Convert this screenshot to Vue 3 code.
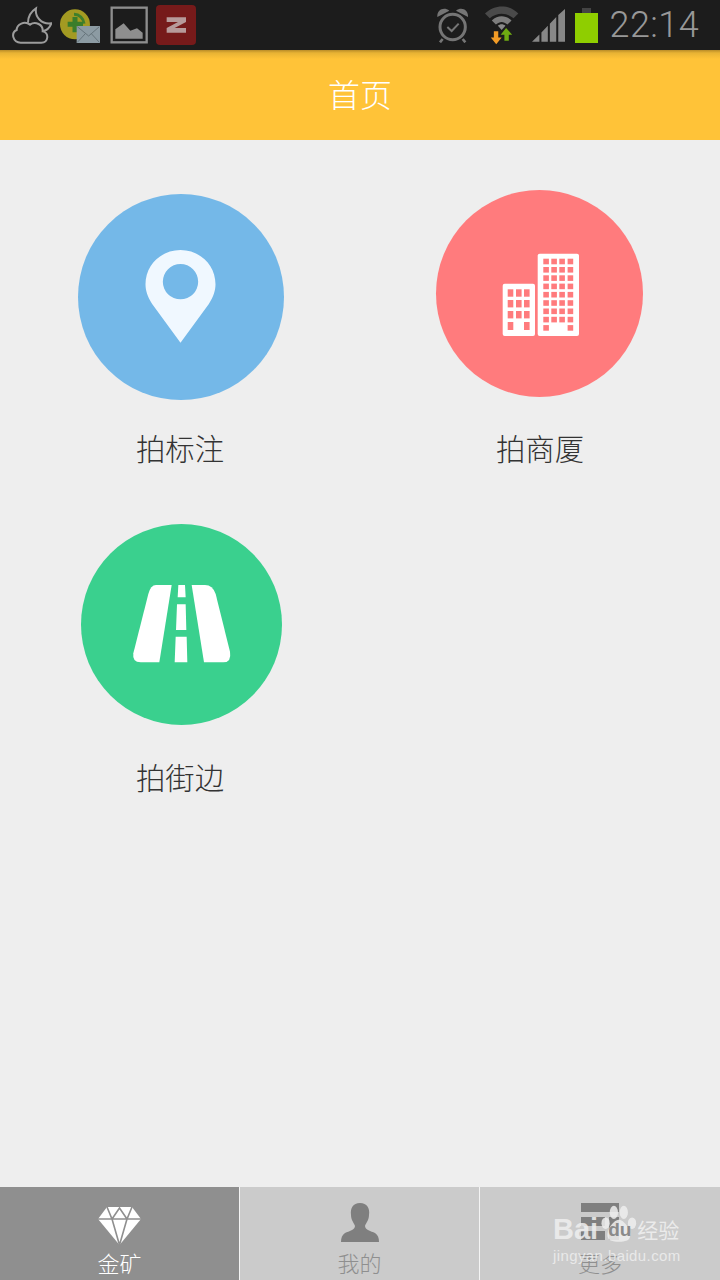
<template>
  <div class="page">
    <!-- 状态栏 -->
    <div class="status">
      <svg class="st-cloud" viewBox="36 15 120 120">
        <path d="M62 128C38 128 32 98 50 90C50 72 74 62 90 74C106 62 130 74 128 94C148 98 146 128 124 128Z" fill="none" stroke="#9c9c9c" stroke-width="6" />
        <path d="M84 68C84 50 94 34 108 25C104 50 124 74 154 70C149 84 140 91 129 93" fill="none" stroke="#9c9c9c" stroke-width="6" />
      </svg>
      <svg class="st-mail" viewBox="177 18 126 111">
        <circle cx="225" cy="70" r="45" fill="#a39a22" />
        <path d="M222 40a30 30 0 0 1 30 28" fill="none" stroke="#3f7f2c" stroke-width="9" />
        <path d="M225 48v46M203 70h46" stroke="#3a7d2a" stroke-width="15" />
        <rect x="230" y="75" width="70" height="51" fill="#8c9ba3" />
        <path d="M232 77l34 28 32-28M232 124l24-26M298 124l-24-26" fill="none" stroke="#66747b" stroke-width="3" />
      </svg>
      <svg class="st-pic" viewBox="327 18 114 114">
        <rect x="332" y="23" width="105" height="104" fill="none" stroke="#8e8e8e" stroke-width="7" />
        <path d="M343 116V88L368 70L388 92L408 85L425 98V116Z" fill="#8e8e8e" />
      </svg>
      <svg class="st-z" viewBox="468 15 120 120">
        <rect x="468" y="15" width="120" height="120" rx="12" fill="#761a1a" />
        <path d="M500 52h58v14l-34 18h34v14h-58v-14l34-18h-34z" fill="#b79a9a" />
      </svg>
      <div class="spacer"></div>
      <svg class="st-alarm" viewBox="55 25 96 105">
        <circle cx="102" cy="82" r="38" fill="none" stroke="#757575" stroke-width="9" />
        <path d="M56 52C54 30 76 20 92 33ZM148 52C150 30 128 20 112 33Z" fill="#757575" />
        <path d="M86 82l13 12 21-22" fill="none" stroke="#757575" stroke-width="6" />
        <path d="M72 118l-8 10M132 118l8 10" stroke="#757575" stroke-width="8" />
      </svg>
      <svg class="st-wifi" viewBox="198 18 100 114">
        <path d="M198 40C226 12 270 12 296 40L282 54C262 36 232 36 212 54Z" fill="#4a4a4a" />
        <path d="M218 60C236 44 258 44 276 60L264 72C252 62 242 62 230 72Z" fill="#7d7d7d" />
        <path d="M236 76C242 70 252 70 258 76L247 88Z" fill="#8a8a8a" />
        <path d="M224 92h13v18h10l-16 20-16-20h9z" fill="#f39c26" />
        <path d="M260 82l18 20h-10v18h-13v-18h-11z" fill="#6faa12" />
      </svg>
      <svg class="st-signal" viewBox="340 28 98 98">
        <path d="M340 125L362 104V125ZM368 98L387 78V125H368ZM393 72L412 52V125H393ZM418 46L438 28V125H418Z" fill="#878787" />
      </svg>
      <div class="battery">
        <div class="battery-cap"></div>
        <div class="battery-body"></div>
      </div>
      <div class="time">22:14</div>
    </div>

    <div class="header">首页</div>

    <!-- 入口列表 -->
    <div class="main">
      <div class="cell cell-mark">
        <div class="circle">
          <svg viewBox="1.5 6 300 330" width="100" height="110">
            <path fill-rule="evenodd" fill="#f0f8ff" d="M150 308L65 192C51 170 45 152 45 133C45 75 92 30 150 30C208 30 255 75 255 133C255 152 249 170 235 192ZM150 72A53 53 0 1 0 150 178A53 53 0 1 0 150 72Z" />
          </svg>
        </div>
        <div class="label">拍标注</div>
      </div>

      <div class="cell cell-building">
        <div class="circle">
          <svg viewBox="0 3 120 120" width="120" height="120">
            <rect x="22.7" y="52.7" width="32.3" height="52.3" rx="2" fill="#fff" />
            <rect x="57.7" y="22.7" width="41.3" height="82.3" rx="2" fill="#fff" />
            <rect v-for="w in windows" :key="w.x + '-' + w.y" :x="w.x" :y="w.y" :width="w.w" :height="w.h" fill="#ff7b7d" />
          </svg>
        </div>
        <div class="label">拍商厦</div>
      </div>

      <div class="cell cell-road">
        <div class="circle">
          <svg viewBox="6 0 360 330" width="120" height="110">
            <path fill="#fff" d="M108 45H155L118 277H62Q36 277 40 250L85 72Q92 45 108 45Z" />
            <path fill="#fff" d="M215 45H255Q278 45 287 72L330 245Q335 277 310 277H252Z" />
            <path fill="#fff" d="M175 45H195L197 82H173ZM171 103H197L199 180H168ZM167 200H200L202 277H164Z" />
          </svg>
        </div>
        <div class="label">拍街边</div>
      </div>
    </div>

    <!-- 底部导航 -->
    <div class="tabs">
      <div class="tab active">
        <svg class="tab-icon" viewBox="0 0 43 38" width="43" height="38">
          <path d="M9 0H34L43 12L21.5 38L0 12Z" fill="#fff" />
          <path d="M0 12H43M9 0L14 12L21.5 1L29 12L34 0M14 12L21.5 38L29 12" fill="none" stroke="#8f8f8f" stroke-width="1.6" />
        </svg>
        <span>金矿</span>
      </div>
      <div class="tab">
        <svg class="tab-icon" viewBox="0 0 38 39" width="38" height="39">
          <path fill="#7f7f7f" d="M19 0C26 0 29 5 28 12C28 17 25 20 24 23C24 27 30 28 34 30C37 32 38 35 38 39H0C0 35 1 32 4 30C8 28 14 27 14 23C13 20 10 17 10 12C9 5 12 0 19 0Z" />
        </svg>
        <span>我的</span>
      </div>
      <div class="tab">
        <svg class="tab-icon" viewBox="0 0 38 39" width="38" height="39">
          <path fill="#7f7f7f" d="M0 0H38V9H0ZM0 14H24V23H0ZM0 28H24V37H0ZM28 14H38V37H28Z" />
        </svg>
        <span>更多</span>
      </div>
    </div>

    <!-- 水印 -->
    <div class="watermark">
      <div class="wm-top">
        <span class="wm-bai">Bai</span>
        <span class="wm-paw">
          <svg viewBox="0 0 46 46" width="38" height="40">
            <ellipse cx="8" cy="22" rx="5" ry="7" fill="#eee" opacity=".85" />
            <ellipse cx="18" cy="9" rx="5" ry="8" fill="#eee" opacity=".85" />
            <ellipse cx="30" cy="9" rx="5" ry="8" fill="#eee" opacity=".85" />
            <ellipse cx="40" cy="22" rx="5" ry="7" fill="#eee" opacity=".85" />
            <path d="M24 18C32 18 44 38 34 43C28 45 20 45 14 43C4 38 16 18 24 18Z" fill="#eee" opacity=".85" />
          </svg>
          <span class="wm-du">du</span>
        </span>
        <span class="wm-cn">经验</span>
      </div>
      <div class="wm-url">jingyan.baidu.com</div>
    </div>
  </div>
</template>

<script setup>
// 楼房窗户，坐标按 120x120 的图标算
const windows = []
const smallX = [27.7, 36, 44]
const smallY = [58.3, 69, 80, 91]
smallY.forEach((y, r) => {
  smallX.forEach((x, c) => {
    if (r === 3 && c === 1) return
    windows.push({ x, y, w: 5.6, h: r === 3 ? 8 : 7.4 })
  })
})
const bigX = [63.3, 71.3, 79.3, 87.6]
for (let r = 0; r < 9; r++) {
  const y = 27.7 + r * 8.3
  bigX.forEach((x, c) => {
    if (r === 8 && (c === 1 || c === 2)) return
    windows.push({ x, y, w: 5.6, h: 5.6 })
  })
}
</script>

<style>
html,
body {
  margin: 0;
  background: #eee;
}
</style>

<style scoped>
.page {
  position: relative;
  width: 720px;
  height: 1280px;
  display: flex;
  flex-direction: column;
  overflow: hidden;
  background: #eee;
  font-family: "Noto Sans CJK SC", "Noto Sans", sans-serif;
}

.status {
  height: 50px;
  flex: none;
  display: flex;
  align-items: center;
  padding: 0 21px 0 12px;
  background: #1c1c1c;
}
.status svg {
  flex: none;
  display: block;
}
.spacer {
  flex: 1;
}
.st-cloud {
  width: 40px;
  height: 40px;
}
.st-mail {
  width: 42px;
  height: 37px;
  margin-left: 7px;
}
.st-pic {
  width: 38px;
  height: 38px;
  margin-left: 9px;
}
.st-z {
  width: 40px;
  height: 40px;
  margin-left: 8px;
}
.st-alarm {
  width: 32px;
  height: 35px;
}
.st-wifi {
  width: 34px;
  height: 39px;
  margin-left: 16px;
}
.st-signal {
  width: 33px;
  height: 33px;
  margin-left: 13px;
  margin-top: 1px;
}
.battery {
  width: 23px;
  margin-left: 10px;
  display: flex;
  flex-direction: column;
  align-items: center;
}
.battery-cap {
  width: 9px;
  height: 5px;
  background: #444;
}
.battery-body {
  width: 23px;
  height: 30px;
  background: #8fce00;
}
.time {
  margin-left: 12px;
  font-family: Roboto, "Liberation Sans", sans-serif;
  font-size: 36px;
  font-weight: 300;
  line-height: 50px;
  letter-spacing: 0.4px;
  color: #989898;
}

.header {
  height: 90px;
  flex: none;
  box-sizing: border-box;
  padding-bottom: 4px;
  display: flex;
  align-items: center;
  justify-content: center;
  font-size: 32px;
  font-weight: 300;
  color: #fff;
  background: linear-gradient(#b98c28 0, #e8b334 3px, #ffc338 9px);
}

.main {
  flex: 1;
  display: grid;
  grid-template-columns: 360px 360px;
  grid-auto-rows: min-content;
}
.cell {
  display: flex;
  flex-direction: column;
  align-items: center;
}
.circle {
  border-radius: 50%;
  display: flex;
  align-items: center;
  justify-content: center;
  overflow: hidden;
}
.circle svg {
  display: block;
  flex: none;
}
.label {
  height: 40px;
  font-size: 29.4px;
  font-weight: 300;
  line-height: 37px;
  color: #333;
}
.cell-mark {
  padding-top: 54px;
}
.cell-mark .circle {
  width: 206px;
  height: 206px;
  margin-left: 1px;
  background: #74b8e8;
}
.cell-mark .label {
  margin-top: 29px;
}
.cell-building {
  padding-top: 50px;
}
.cell-building .circle {
  width: 207px;
  height: 207px;
  margin-left: -1px;
  background: #ff7b7d;
}
.cell-building .label {
  margin-top: 32px;
}
.cell-road {
  padding-top: 55px;
}
.cell-road .circle {
  width: 201px;
  height: 201px;
  margin-left: 3px;
  background: #3ad08e;
}
.cell-road .label {
  margin-top: 33px;
}

.tabs {
  height: 93px;
  flex: none;
  display: grid;
  grid-template-columns: 240px 240px 240px;
}
.tab {
  box-sizing: border-box;
  display: flex;
  flex-direction: column;
  align-items: center;
  background: #cbcbcb;
  border-right: 1px solid #f4f4f4;
  color: #8f8f8f;
  font-size: 22px;
  font-weight: 300;
  line-height: 30px;
}
.tab:last-child {
  border-right: none;
}
.tab.active {
  background: #8f8f8f;
  color: #fff;
}
.tab-icon {
  display: block;
  flex: none;
  margin-top: 20px;
  margin-bottom: 2px;
}
.tab:nth-child(n + 2) .tab-icon {
  margin-top: 16px;
  margin-bottom: 5px;
}

.watermark {
  position: absolute;
  left: 553px;
  top: 1203px;
  width: 130px;
  color: #efefef;
}
.wm-top {
  display: flex;
  align-items: flex-end;
  height: 42px;
}
.wm-bai {
  font-family: "Liberation Sans", sans-serif;
  font-size: 29px;
  font-weight: 700;
  line-height: 32px;
  opacity: 0.85;
}
.wm-paw {
  position: relative;
  width: 38px;
  height: 40px;
  margin-left: 1px;
  margin-bottom: 1px;
}
.wm-paw svg {
  display: block;
}
.wm-du {
  position: absolute;
  left: 9px;
  top: 15px;
  font-family: "Liberation Sans", sans-serif;
  font-size: 19px;
  font-weight: 700;
  line-height: 22px;
  color: #8a8a8a;
}
.wm-cn {
  font-size: 21px;
  line-height: 32px;
  white-space: nowrap;
  opacity: 0.9;
}
.wm-url {
  margin-top: 2px;
  font-family: "Liberation Sans", sans-serif;
  font-size: 15px;
  line-height: 18px;
  letter-spacing: 0.4px;
  white-space: nowrap;
  opacity: 0.85;
}
</style>
